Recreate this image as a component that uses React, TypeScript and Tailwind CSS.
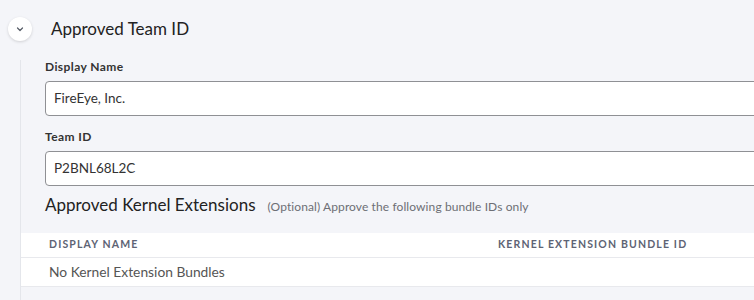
import React from 'react';

const fields = [
  { label: 'Display Name', value: 'FireEye, Inc.' },
  { label: 'Team ID', value: 'P2BNL68L2C' },
];

function ChevronDown() {
  return (
    <svg width="10" height="10" viewBox="0 0 10 10" fill="none">
      <path d="M2.5 4L5 6.5L7.5 4" stroke="#555b66" strokeWidth="1.2" strokeLinecap="round" strokeLinejoin="round" />
    </svg>
  );
}

export default function App() {
  return (
    <div className="w-[754px] h-[300px] overflow-hidden bg-[#f4f5f9] font-['Lato',sans-serif] text-[#2b2b2b]">
      <div className="w-[920px] pt-[17px] pl-2">
        {/* Section header */}
        <div className="flex items-center gap-[19px]">
          <button
            type="button"
            className="w-6 h-6 rounded-full bg-white flex items-center justify-center shadow-[0_1px_3px_rgba(0,0,0,0.15)]"
          >
            <ChevronDown />
          </button>
          <h2 className="text-[17px] leading-6 text-[#222]">Approved Team ID</h2>
        </div>

        {/* Section body */}
        <div className="ml-3 mt-[19px] border-l border-[#e4e6eb] pb-4">
          <div className="pl-6">
            {fields.map((f, i) => (
              <div key={f.label} className={i > 0 ? 'mt-[14px]' : ''}>
                <label className="block text-[12px] leading-[14px] font-bold tracking-[0.4px] text-[#333]">{f.label}</label>
                <div className="mt-[7px] h-[35px] bg-white border border-[#8f9094] rounded-[4px] flex items-center pl-2">
                  <span className="text-[13.5px] text-[#333]">{f.value}</span>
                </div>
              </div>
            ))}

            <div className="mt-[7px] flex items-baseline gap-3">
              <h3 className="text-[17px] leading-6 text-[#222]">Approved Kernel Extensions</h3>
              <span className="text-[12px] tracking-[0.1px] text-[#6d6f75]">(Optional) Approve the following bundle IDs only</span>
            </div>
          </div>

          {/* Table */}
          <div className="mt-[16px] bg-white">
            <div className="grid grid-cols-[449px_1fr] h-[25px] items-center border-b border-[#e8e9ed] text-[10.5px] font-bold tracking-[0.11em] text-[#5d6374]">
              <div className="pl-7">DISPLAY NAME</div>
              <div className="pl-7">KERNEL EXTENSION BUNDLE ID</div>
            </div>
            <div className="h-[29px] flex items-center border-b border-[#e8e9ed] pl-7 text-[13.8px] text-[#555]">
              No Kernel Extension Bundles
            </div>
          </div>
        </div>
      </div>
    </div>
  );
}
